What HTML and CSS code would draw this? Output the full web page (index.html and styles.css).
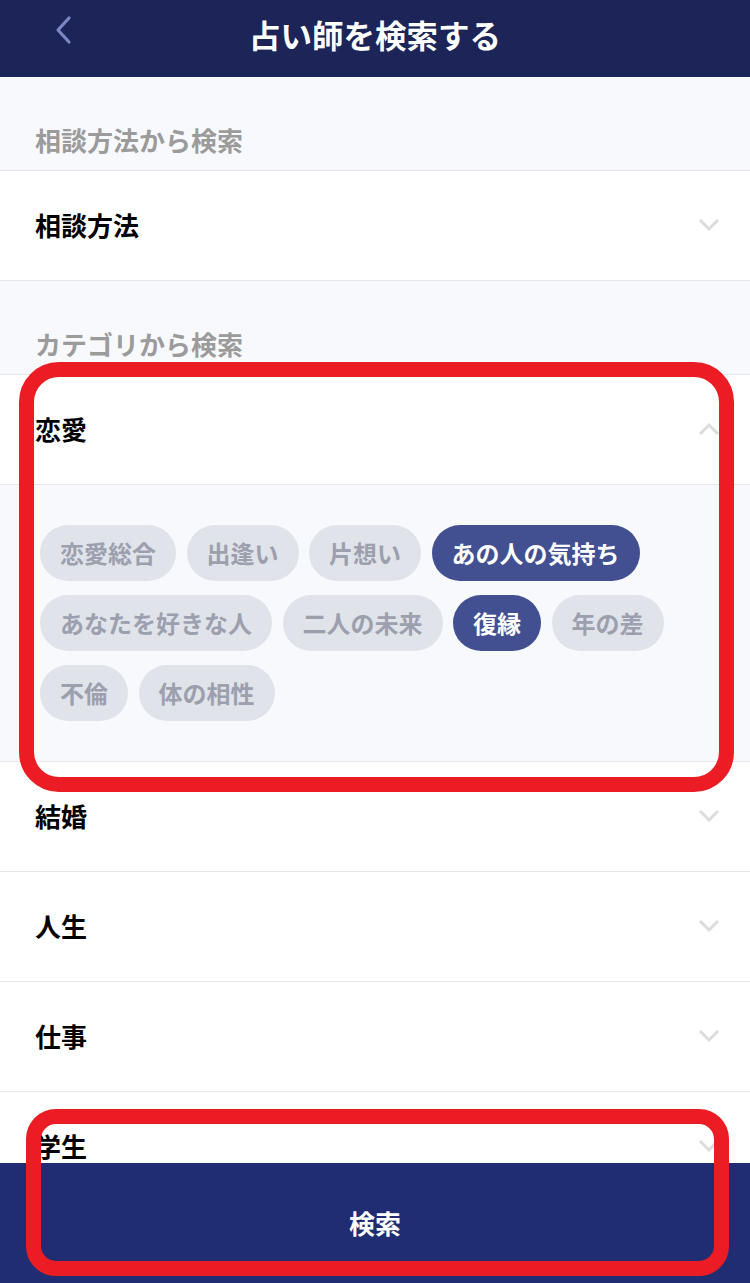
FILE: index.html
```html
<!DOCTYPE html>
<html lang="ja">
<head>
<meta charset="utf-8">
<title>占い師を検索する</title>
<link rel="stylesheet" href="styles.css">
</head>
<body>
<div class="app">
  <header class="topbar">
    <button class="back" aria-label="戻る">
      <svg width="20" height="30" viewBox="0 0 20 30"><path d="M15 3 L4 15 L15 27" fill="none" stroke="#7c87c6" stroke-width="3.2" stroke-linecap="round" stroke-linejoin="round"/></svg>
    </button>
    <h1 class="title">占い師を検索する</h1>
  </header>

  <main class="content">
    <div class="section-label">相談方法から検索</div>
    <div class="row">
      <span class="row-text">相談方法</span>
      <svg class="chev" width="24" height="14" viewBox="0 0 24 14"><path d="M3 2 L12 11 L21 2" fill="none" stroke="#dcdcdc" stroke-width="3"/></svg>
    </div>

    <div class="section-label">カテゴリから検索</div>
    <div class="row">
      <span class="row-text">恋愛</span>
      <svg class="chev" width="24" height="14" viewBox="0 0 24 14"><path d="M3 12 L12 3 L21 12" fill="none" stroke="#dcdcdc" stroke-width="3"/></svg>
    </div>
    <div class="chips-panel">
      <div class="chips">
        <span class="chip">恋愛総合</span>
        <span class="chip">出逢い</span>
        <span class="chip">片想い</span>
        <span class="chip active">あの人の気持ち</span>
        <span class="chip">あなたを好きな人</span>
        <span class="chip">二人の未来</span>
        <span class="chip active">復縁</span>
        <span class="chip">年の差</span>
        <span class="chip">不倫</span>
        <span class="chip">体の相性</span>
      </div>
    </div>
    <div class="row">
      <span class="row-text">結婚</span>
      <svg class="chev" width="24" height="14" viewBox="0 0 24 14"><path d="M3 2 L12 11 L21 2" fill="none" stroke="#dcdcdc" stroke-width="3"/></svg>
    </div>
    <div class="row">
      <span class="row-text">人生</span>
      <svg class="chev" width="24" height="14" viewBox="0 0 24 14"><path d="M3 2 L12 11 L21 2" fill="none" stroke="#dcdcdc" stroke-width="3"/></svg>
    </div>
    <div class="row">
      <span class="row-text">仕事</span>
      <svg class="chev" width="24" height="14" viewBox="0 0 24 14"><path d="M3 2 L12 11 L21 2" fill="none" stroke="#dcdcdc" stroke-width="3"/></svg>
    </div>
    <div class="row">
      <span class="row-text">学生</span>
      <svg class="chev" width="24" height="14" viewBox="0 0 24 14"><path d="M3 2 L12 11 L21 2" fill="none" stroke="#dcdcdc" stroke-width="3"/></svg>
    </div>
  </main>

  <footer class="bottombar">
    <button class="search-btn">検索</button>
  </footer>

  <div class="mark mark-category"></div>
  <div class="mark mark-search"></div>
</div>
</body>
</html>
```

FILE: styles.css
```css
* { box-sizing: border-box; }
html, body { margin: 0; padding: 0; }
body {
  font-family: "Noto Sans CJK JP", "Noto Sans", sans-serif;
  background: #f8f9fc;
}
.app {
  position: relative;
  width: 750px;
  height: 1283px;
  display: flex;
  flex-direction: column;
  overflow: hidden;
}
.topbar {
  flex: 0 0 77px;
  background: #1d2558;
  display: flex;
  align-items: center;
  justify-content: center;
  position: relative;
}
.back {
  position: absolute;
  left: 54px;
  top: 15px;
  border: 0;
  background: none;
  padding: 0;
  width: 20px;
  height: 30px;
}
.title {
  margin: 0 0 10px;
  color: #fff;
  font-size: 31.5px;
  font-weight: 700;
  line-height: 44px;
  letter-spacing: 0;
}
.content {
  flex: 1 1 auto;
  overflow: hidden;
  background: #f8f9fc;
}
.section-label {
  height: 94px;
  border-bottom: 1px solid #e6e7eb;
  display: flex;
  align-items: flex-end;
  padding: 0 35px 12px;
  color: #9b9b9b;
  font-size: 26px;
  font-weight: 700;
  line-height: 36px;
}
.row {
  height: 110px;
  background: #fff;
  border-bottom: 1px solid #e6e7eb;
  display: flex;
  align-items: center;
  justify-content: space-between;
  padding: 0 29px 2px 35px;
}
.row-text {
  font-size: 26px;
  font-weight: 700;
  color: #000;
  line-height: 36px;
}
.chips-panel {
  background: #f8f9fc;
  border-bottom: 1px solid #e6e7eb;
  padding: 40px 40px 40px 40px;
}
.chips {
  display: flex;
  flex-wrap: wrap;
  gap: 14px 10.5px;
}
.chip {
  height: 56px;
  padding: 0 20px;
  border-radius: 28px;
  background: #e1e3ea;
  color: #9ca0ae;
  font-size: 24px;
  font-weight: 700;
  display: flex;
  align-items: center;
  line-height: 1;
}
.chip.active {
  background: #424f91;
  color: #fff;
}
.bottombar {
  flex: 0 0 120px;
  background: #212d72;
  display: flex;
  align-items: center;
  justify-content: center;
}
.search-btn {
  border: 0;
  background: none;
  color: #fff;
  font-family: inherit;
  font-size: 26px;
  font-weight: 700;
  line-height: 36px;
  padding: 0;
  margin-top: -1px;
}
.mark {
  position: absolute;
  border: 15px solid #ec1c24;
  pointer-events: none;
}
.mark-category {
  left: 19px;
  top: 362px;
  width: 715px;
  height: 430px;
  border-radius: 40px;
}
.mark-search {
  left: 26px;
  top: 1109px;
  width: 703px;
  height: 167px;
  border-radius: 30px;
}
```
